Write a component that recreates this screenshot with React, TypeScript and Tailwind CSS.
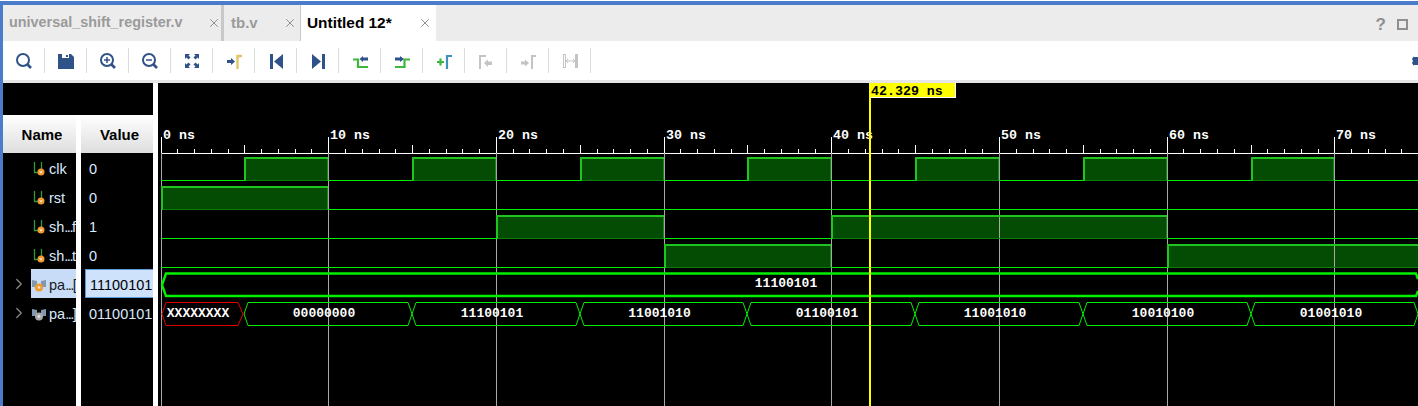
import { ChevronRight, X } from "lucide-react"
import type { ReactNode } from "react"

const NAVY = "#2f5288"
const GREEN = "#3cb83c"
const GRAY = "#c4c4c4"

// 波形图的时间轴: 1ns = 16.77px
const nsX = (ns: number) => Math.floor(161 + ns * 16.77)

function Ico({ children }: { children: ReactNode }) {
  return (
    <svg width="20" height="20" viewBox="0 0 20 20" fill="none">
      {children}
    </svg>
  )
}

const Glass = ({ mark }: { mark?: "in" | "out" }) => (
  <Ico>
    <circle cx="9" cy="9" r="6" stroke={NAVY} strokeWidth="2" />
    <path d="M13.5 13.5L17 17" stroke={NAVY} strokeWidth="2.6" />
    {mark && <path d="M6 9H12" stroke={NAVY} strokeWidth="1.5" />}
    {mark === "in" && <path d="M9 6V12" stroke={NAVY} strokeWidth="1.5" />}
  </Ico>
)

const tools: ReactNode[] = [
  <Glass key="search" />,
  <Ico key="save">
    <path d="M2 3H15L18 6V18H2Z" fill={NAVY} />
    <rect x="6" y="3" width="7" height="4" fill="#fff" />
    <rect x="10" y="4" width="2" height="2" fill={NAVY} />
  </Ico>,
  <Glass key="in" mark="in" />,
  <Glass key="out" mark="out" />,
  <Ico key="fit">
    <path d="M3 3H8L6.5 4.5L8.5 6.5L6.5 8.5L4.5 6.5L3 8Z" fill={NAVY} />
    <path d="M17 3H12L13.5 4.5L11.5 6.5L13.5 8.5L15.5 6.5L17 8Z" fill={NAVY} />
    <path d="M3 17H8L6.5 15.5L8.5 13.5L6.5 11.5L4.5 13.5L3 12Z" fill={NAVY} />
    <path d="M17 17H12L13.5 15.5L11.5 13.5L13.5 11.5L15.5 13.5L17 12Z" fill={NAVY} />
  </Ico>,
  <Ico key="cursor">
    <path d="M3 9H7V7L11 10.5L7 14V12H3Z" fill={NAVY} />
    <path d="M13.5 18V5H18" stroke="#e3c66a" strokeWidth="2.4" />
  </Ico>,
  <Ico key="first">
    <rect x="4" y="3" width="3" height="15" fill={NAVY} />
    <path d="M17 3V18L8 10.5Z" fill={NAVY} />
  </Ico>,
  <Ico key="last">
    <rect x="14" y="3" width="3" height="15" fill={NAVY} />
    <path d="M4 3V18L13 10.5Z" fill={NAVY} />
  </Ico>,
  <Ico key="prev">
    <path d="M3 8.5H8V16H18" stroke={GREEN} strokeWidth="2.2" />
    <path d="M9.5 8L13 5V6.5H18V9.5H13V11Z" fill={NAVY} />
  </Ico>,
  <Ico key="next">
    <path d="M3 16H12.5V8.5H18" stroke={GREEN} strokeWidth="2.2" />
    <path d="M3 6.5H8V5L12 8L8 11V9.5H3Z" fill={NAVY} />
  </Ico>,
  <Ico key="add">
    <path d="M3 11H10M6.5 7.5V14.5" stroke={GREEN} strokeWidth="2.2" />
    <path d="M13 18V5H18" stroke="#3f8fc0" strokeWidth="2.2" />
  </Ico>,
  <Ico key="pmark">
    <path d="M4 18V5H10" stroke={GRAY} strokeWidth="2" />
    <path d="M8 12L12 8.5V10.5H16V14H12V16Z" fill={GRAY} />
  </Ico>,
  <Ico key="nmark">
    <path d="M3 10.5H7V8.5L11 12L7 15.5V13.5H3Z" fill={GRAY} />
    <path d="M14 18V5H18" stroke={GRAY} strokeWidth="2" />
  </Ico>,
  <Ico key="swap">
    <rect x="3.5" y="3.5" width="2" height="13" stroke={GRAY} />
    <rect x="15" y="3" width="3" height="14" fill={GRAY} />
    <path d="M6 10H15M6 10L8 8M6 10L8 12M15 10L13 8M15 10L13 12" stroke={GRAY} />
  </Ico>,
]

// 标量/总线信号的小图标
function SignalIcon({ bus, color }: { bus?: boolean; color: string }) {
  if (bus) {
    return (
      <svg width="14" height="16" viewBox="0 0 14 16" className="shrink-0">
        <path d="M0 2L5 3V9H0ZM14 2L9 3V9H14Z" fill="#7f98ad" />
        <circle cx="7" cy="9.5" r="4" fill={color} />
        <circle cx="7" cy="9.5" r="1.4" fill="#fff" fillOpacity="0.65" />
      </svg>
    )
  }
  return (
    <svg width="14" height="16" viewBox="0 0 14 16" className="shrink-0">
      <path d="M2.5 0V10.5H6M9.5 0V7" stroke="#2e9a3c" strokeWidth="1.3" fill="none" />
      <circle cx="9" cy="10" r="3.5" fill={color} />
      <path d="M7.8 9L9 11.2L10.2 9" stroke="#fff" strokeWidth="0.8" fill="none" />
    </svg>
  )
}

const signals = [
  { head: "clk", value: "0" },
  { head: "rst", value: "0" },
  { head: "sh", tail: "f", value: "1" },
  { head: "sh", tail: "t", value: "0" },
  { head: "pa", tail: "[", value: "11100101", bus: true, selected: true },
  { head: "pa", tail: "]", value: "01100101", bus: true },
]

// 每行: 低电平 y, 高电平 y, 高电平区间 (ns)
const waves = [
  { low: 180.5, high: 158, spans: [[5, 10], [15, 20], [25, 30], [35, 40], [45, 50], [55, 60], [65, 70], [75, 80]] },
  { low: 209.5, high: 187, spans: [[0, 10]] },
  { low: 238.5, high: 216, spans: [[20, 30], [40, 60]] },
  { low: 267.5, high: 245, spans: [[30, 40], [60, 80]] },
]

const busValues = ["00000000", "11100101", "11001010", "01100101", "11001010", "10010100", "01001010"]

function Tab({ label, active, className, labelClass, closeClass }: { label: string; active?: boolean; className: string; labelClass: string; closeClass: string }) {
  return (
    <div className={`flex h-full items-center ${active ? "bg-white text-black" : "text-[#9a9a9a]"} ${className}`}>
      <span className={`flex-1 font-bold ${labelClass}`}>{label}</span>
      <X size={14} strokeWidth={1.6} className={`text-[#8a8a8a] ${closeClass}`} />
    </div>
  )
}

function Waveform() {
  const ticks = Array.from({ length: 76 }, (_, i) => i)
  const decades = [0, 10, 20, 30, 40, 50, 60, 70]
  const spanBox = (a: number, b: number) => [nsX(a), Math.min(nsX(b), 1419)]
  return (
    <svg viewBox="158 83 1260 323" className="h-full w-[1260px] shrink-0" shapeRendering="crispEdges" fontFamily="'Liberation Mono', monospace">
      {/* 时间刻度 */}
      <path d="M161 153.5H1418" stroke="#fff" />
      {ticks.map((ns) => {
        const top = ns % 10 === 0 ? 137 : ns % 5 === 0 ? 145 : 149
        return <path key={ns} d={`M${nsX(ns) + 0.5} ${top}V153`} stroke="#fff" />
      })}
      {decades.map((ns) => (
        <text key={ns} x={nsX(ns) + 2} y={139} fill="#fff" fontSize="13.3" fontWeight="700" shapeRendering="auto">
          {ns} ns
        </text>
      ))}

      {/* 填充在网格线下面 */}
      {waves.map((w, i) =>
        w.spans.map(([a, b]) => {
          const [x1, x2] = spanBox(a, b)
          return <rect key={`${i}-${a}`} x={x1} y={w.high} width={x2 - x1} height={w.low - w.high} fill="#044c04" />
        }),
      )}
      {decades.map((ns) => (
        <path key={ns} d={`M${nsX(ns) + 0.5} 153V406`} stroke="#a8a8a8" />
      ))}

      {/* 标量信号 */}
      {waves.map((w, i) => (
        <g key={i}>
          <path d={`M161 ${w.low}H1418`} stroke="#00ee00" />
          {w.spans.map(([a, b]) => {
            const [x1, x2] = spanBox(a, b)
            return (
              <g key={a}>
                <path d={`M${x1} ${w.low}H${x2}`} stroke="#0b7d0b" />
                <path d={`M${x2 - 0.5} ${w.high}V${w.low}`} stroke="#0b8a0b" />
                <path d={`M${x1 + 1} ${w.low}V${w.high}H${x2}`} stroke="#1fc41f" strokeWidth="2" fill="none" />
              </g>
            )
          })}
        </g>
      ))}

      {/* 总线信号 */}
      <path d="M162 285L166 273.5H1416L1418 279M1418 291L1416 296H166L162 285" fill="none" stroke="#00f000" strokeWidth="2.4" shapeRendering="auto" />
      <text x="786" y="287" textAnchor="middle" fill="#fff" fontSize="13" fontWeight="700" shapeRendering="auto">
        11100101
      </text>

      <path d="M162 314L166 302.5H238L243 314L238 325.5H166Z" fill="#000" stroke="#e00000" shapeRendering="auto" />
      <text x="198" y="317" textAnchor="middle" fill="#fff" fontSize="13" fontWeight="700" shapeRendering="auto">
        XXXXXXXX
      </text>
      {busValues.map((v, i) => {
        const a = nsX(5 + i * 10)
        const b = nsX(15 + i * 10)
        const end = Math.min(b, 1418)
        const d = `M${a + 4} 302.5H${end - 4}L${end} 314L${end - 4} 325.5H${a + 4}L${a} 314Z`
        return (
          <g key={i}>
            <path d={d} fill="none" stroke="#00ee00" strokeWidth="1" shapeRendering="auto" />
            <text x={i === 6 ? 1331 : (a + b) / 2 - 4} y="317" textAnchor="middle" fill="#fff" fontSize="13" fontWeight="700" shapeRendering="auto">
              {v}
            </text>
          </g>
        )
      })}

      {/* 光标 */}
      <rect x="869" y="83" width="2" height="323" fill="#ffff00" />
      <rect x="869" y="83" width="86" height="15" fill="#ffff00" />
      <path d="M871 97.5H955.5V83" stroke="#fff" fill="none" />
      <text x="871" y="95" fill="#000" fontSize="13.3" fontWeight="700" shapeRendering="auto">
        42.329 ns
      </text>
    </svg>
  )
}

export default function App() {
  return (
    <div className="flex h-[406px] w-[1418px] flex-col overflow-hidden bg-white font-['Liberation_Sans',sans-serif]">
      <div className="mt-px h-[4px] shrink-0 bg-[#4a7cc9]" />
      <div className="flex min-h-0 flex-1">
        <div className="w-[3px] shrink-0 bg-[#4a7cc9]" />
        <div className="flex min-w-0 flex-1 flex-col">
          {/* 标签栏 */}
          <div className="flex h-[36px] shrink-0 items-center bg-[#ececec]">
            <Tab label="universal_shift_register.v" labelClass="text-[14.4px]" closeClass="mr-0" className="w-[221px] border-r-[3px] border-[#c8c8c8] pl-[6px]" />
            <Tab label="tb.v" labelClass="text-[15px]" closeClass="mr-[3px]" className="w-[77px] border-r border-[#c8c8c8] pl-[7px]" />
            <Tab label="Untitled 12*" active labelClass="text-[15.4px]" closeClass="mr-[4px]" className="w-[135px] pl-[6px]" />
            <div className="flex-1" />
            <span className="mr-[11px] mt-[4px] font-bold text-[17px] text-[#8f8f8f]">?</span>
            <div className="mr-[10px] mt-[2px] h-[11px] w-[11px] border-2 border-[#8f8f8f]" />
          </div>

          {/* 工具栏 */}
          <div className="flex h-[39px] shrink-0 items-center bg-white">
            {tools.map((icon, i) => (
              <div key={i} className="flex h-[25px] w-[42px] items-center justify-center border-r border-[#dcdcdc]">
                {icon}
              </div>
            ))}
            <div className="flex-1" />
            <svg width="6" height="12" viewBox="0 0 6 12">
              <path d="M6 0V3H3L1.5 1.5L0 4L1 6L0 8L1.5 10.5L3 9H6V12Z" fill={NAVY} />
              <rect x="2" y="2" width="4" height="8" fill={NAVY} />
            </svg>
          </div>
          <div className="h-[3px] shrink-0 bg-[#e6e6e6]" />

          <div className="flex min-h-0 flex-1 bg-black">
            {/* 名称/数值列 */}
            <div className="flex w-[150px] shrink-0 flex-col">
              <div className="h-[32px] shrink-0" />
              <div className="flex min-h-0 flex-1">
                <div className="w-[73px] shrink-0 overflow-hidden">
                  <div className="flex h-[38px] items-center justify-center bg-gradient-to-b from-white to-[#dedede] pl-[5px] pt-[2px] text-[15px] font-bold text-black">Name</div>
                  {signals.map((s, i) => (
                    <div key={i} className="flex h-[29px] items-center whitespace-nowrap text-[14.5px]">
                      <div className="flex w-[28px] shrink-0 justify-start pl-[7px]">
                        {s.bus && <ChevronRight size={18} strokeWidth={1.6} className="text-[#8a8a8a]" />}
                      </div>
                      <div className={`flex h-[29px] flex-1 items-center gap-[3px] pl-[1px] pt-[4px] ${s.selected ? "bg-[#c8dcf8] text-[#1a1a1a]" : "text-[#dbeaff]"}`}>
                        <SignalIcon bus={s.bus} color={s.bus && !s.selected ? "#a8a8a8" : "#f09a2e"} />
                        <span>
                          {s.head}
                          {s.tail && <span className="tracking-[-1.5px]">...</span>}
                          {s.tail}
                        </span>
                      </div>
                    </div>
                  ))}
                </div>
                <div className="w-[5px] shrink-0 bg-white" />
                <div className="w-[72px] shrink-0 overflow-hidden">
                  <div className="flex h-[38px] items-center justify-center bg-gradient-to-b from-white to-[#dedede] pl-[5px] pt-[2px] text-[15px] font-bold text-black">Value</div>
                  {signals.map((s, i) => (
                    <div key={i} className="h-[29px] pl-[4px]">
                      <div className={`flex h-[29px] items-center pl-[4px] pt-[4px] text-[14.5px] ${s.selected ? "border border-r-0 border-[#5b9bd5] bg-[#cfe2fb] text-black" : "text-[#dbeaff]"}`}>
                        {s.value}
                      </div>
                    </div>
                  ))}
                </div>
              </div>
            </div>
            <div className="w-[5px] shrink-0 bg-white" />
            <Waveform />
          </div>
        </div>
      </div>
    </div>
  )
}
